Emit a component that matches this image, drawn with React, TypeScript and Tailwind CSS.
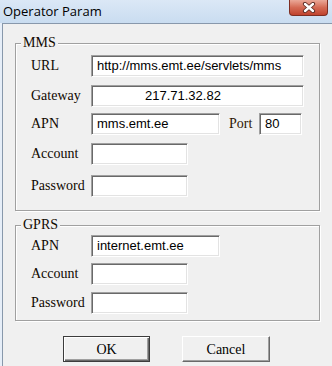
import React from "react";

const serif = { fontFamily: '"Liberation Serif", "Times New Roman", serif' };
const sans = { fontFamily: '"Liberation Sans", Arial, sans-serif' };

// sunken win32 edit box
const Field: React.FC<{ w: string; value?: string; pad?: string }> = ({ w, value, pad }) => (
  <div
    className={`${w} h-[22px] bg-white border-t-[1px] border-l-[1px] border-b-[1px] border-r-[1px] border-t-[#a0a0a0] border-l-[#a0a0a0] border-b-white border-r-white shadow-[inset_1px_1px_0_#696969,inset_-1px_-1px_0_#e3e3e3] flex items-center ${pad ?? "pl-[5px]"} text-[13px] text-black`}
    style={sans}
  >
    {value}
  </div>
);

const Label: React.FC<{ children: React.ReactNode }> = ({ children }) => (
  <span className="w-[60px] shrink-0 text-[14px] leading-none text-[#100800]" style={serif}>
    {children}
  </span>
);

const Group: React.FC<{ title: string; className: string; children: React.ReactNode }> = ({ title, className, children }) => (
  <div className={`relative ml-[12px] w-[305px] border border-[#a0a0a0] shadow-[inset_1px_1px_0_#fff,1px_1px_0_#fff] ${className}`}>
    <span
      className="absolute top-[-9px] left-[5px] px-[2px] bg-[#f0f0f0] text-[14px] leading-[16px] text-[#100800]"
      style={serif}
    >
      {title}
    </span>
    {children}
  </div>
);

const App: React.FC = () => {
  return (
    <div className="relative w-[332px] h-[366px] flex flex-col bg-[#e6eef8] overflow-hidden">
      {/* title bar */}
      <div
        className="h-[23px] shrink-0 flex items-center pl-[3px] bg-gradient-to-b from-[#dbe8f6] to-[#c9dcf0] text-[13px] text-black"
        style={{ fontFamily: '"Segoe UI", "Open Sans", sans-serif' }}
      >
        Operator Param
      </div>
      <div className="absolute top-0 right-[4px] w-[39px] h-[16px] rounded-b-[4px] border border-t-0 border-[#7e2e22] bg-gradient-to-b from-[#eaa898] via-[#d46a54] to-[#c0432e] flex items-center justify-center">
        <svg width="14" height="11" viewBox="0 0 14 11">
          <path d="M3 2 L11 9 M11 2 L3 9" stroke="#5a2a22" strokeWidth="4.2" strokeLinecap="round" />
          <path d="M3 2 L11 9 M11 2 L3 9" stroke="#fff" strokeWidth="2.4" strokeLinecap="round" />
        </svg>
      </div>

      {/* dialog body */}
      <div className="flex-1 ml-[2px] bg-[#f0f0f0] border-l border-t border-[#8898ab] flex flex-col">
        <Group title="MMS" className="mt-[19px] h-[168px] pt-[11px] pl-[15px]">
          <div className="flex items-center">
            <Label>URL</Label>
            <Field w="w-[213px]" value="http://mms.emt.ee/servlets/mms" />
          </div>
          <div className="flex items-center mt-[8px]">
            <Label>Gateway</Label>
            <Field w="w-[213px]" value="217.71.32.82" pad="pl-[53px]" />
          </div>
          <div className="flex items-center mt-[6px]">
            <Label>APN</Label>
            <Field w="w-[129px]" value="mms.emt.ee" />
            <span className="w-[39px] pl-[9px] text-[14px] leading-none text-[#2e1604]" style={serif}>
              Port
            </span>
            <Field w="w-[43px]" value="80" />
          </div>
          <div className="flex items-center mt-[8px]">
            <Label>Account</Label>
            <Field w="w-[97px]" />
          </div>
          <div className="flex items-center mt-[10px]">
            <Label>Password</Label>
            <Field w="w-[97px]" />
          </div>
        </Group>

        <Group title="GPRS" className="mt-[14px] h-[96px] pt-[9px] pl-[15px]">
          <div className="flex items-center">
            <Label>APN</Label>
            <Field w="w-[129px]" value="internet.emt.ee" />
          </div>
          <div className="flex items-center mt-[6px]">
            <Label>Account</Label>
            <Field w="w-[97px]" />
          </div>
          <div className="flex items-center mt-[7px]">
            <Label>Password</Label>
            <Field w="w-[97px]" />
          </div>
        </Group>

        <div className="flex ml-[60px] mt-[15px] gap-[32px]">
          <button
            className="w-[87px] h-[26px] border border-[#3c3c3c] bg-[#f0f0f0] shadow-[inset_1px_1px_0_#fff,inset_-1px_-1px_0_#696969,inset_-2px_-2px_0_#a0a0a0] text-[14px] text-black"
            style={serif}
          >
            OK
          </button>
          <button
            className="w-[88px] h-[26px] border-t border-l border-r border-b border-t-white border-l-white border-r-[#696969] border-b-[#696969] bg-[#f0f0f0] shadow-[inset_-1px_-1px_0_#a0a0a0] text-[14px] text-black"
            style={serif}
          >
            Cancel
          </button>
        </div>
      </div>
    </div>
  );
};

export default App;
